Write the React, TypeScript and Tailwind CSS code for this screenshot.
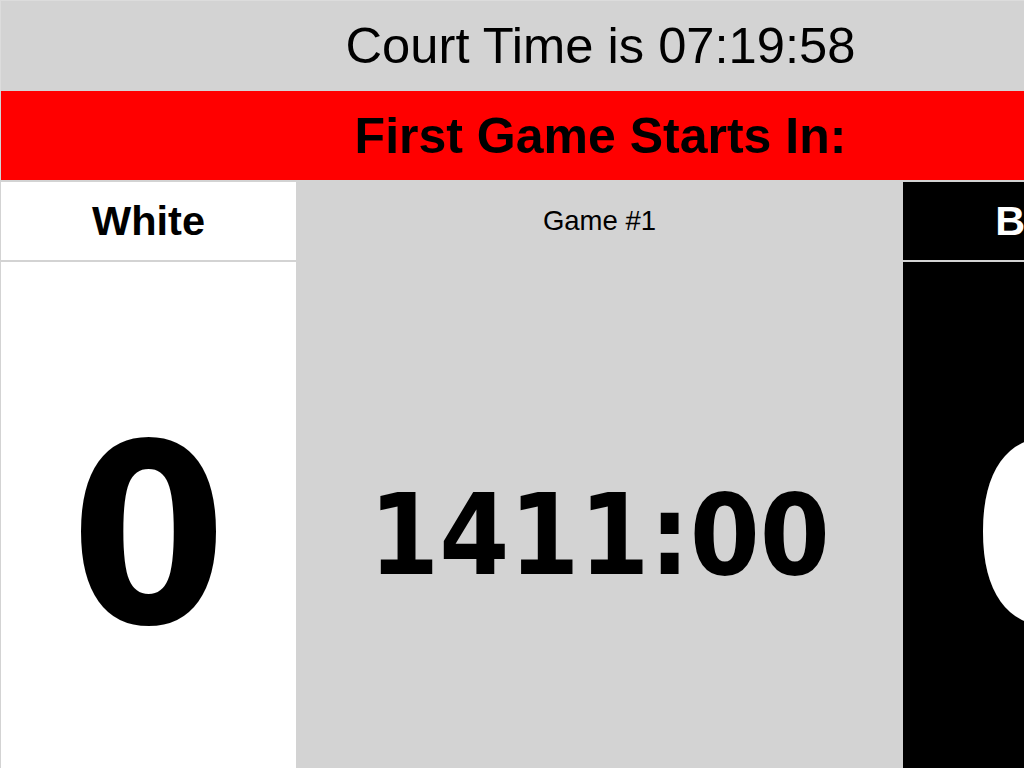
import React from 'react';

const sans = "font-['Liberation_Sans',Arial,sans-serif]";
const digits = "font-['DejaVu_Sans_Condensed','DejaVu_Sans',sans-serif] [font-stretch:condensed]";

const App: React.FC = () => {
  return (
    <div className="w-screen h-screen overflow-hidden bg-white">
      <div className={`w-[1200px] bg-[#d3d3d3] text-black ${sans} flex flex-col`}>
        {/* Court clock */}
        <div className="h-[91px] flex items-center justify-center border-t border-l border-[#dcdcdc]">
          <span className="text-[50.7px] leading-none">Court Time is 07:19:58</span>
        </div>

        {/* Banner */}
        <div className="h-[89px] ml-px bg-[#ff0000] flex items-center justify-center">
          <span className="text-[50px] font-bold leading-none">First Game Starts In:</span>
        </div>

        {/* Scoreboard */}
        <div className="grid grid-cols-[295px_603px_295px] grid-rows-[78px_538px] gap-[2px] pl-px pt-[2px]">
          <div className="bg-white flex items-center justify-center">
            <span className="text-[41.5px] font-bold leading-none">White</span>
          </div>
          <div className="bg-[#d3d3d3] flex items-center justify-center">
            <span className="text-[27.5px] leading-none">Game #1</span>
          </div>
          <div className="bg-black text-white flex items-center justify-center">
            <span className="text-[41.5px] font-bold leading-none">Black</span>
          </div>

          <div className="bg-white flex items-center justify-center pt-[10px]">
            <span className={`${digits} text-[250px] font-bold leading-none`}>0</span>
          </div>
          <div className="bg-[#d3d3d3] flex items-center justify-center pt-[7px]">
            <span className={`${digits} text-[112px] font-bold leading-none`}>1411:00</span>
          </div>
          <div className="bg-black text-white flex items-center justify-center pt-[10px]">
            <span className={`${digits} text-[250px] font-bold leading-none`}>0</span>
          </div>
        </div>
      </div>
    </div>
  );
};

export default App;
